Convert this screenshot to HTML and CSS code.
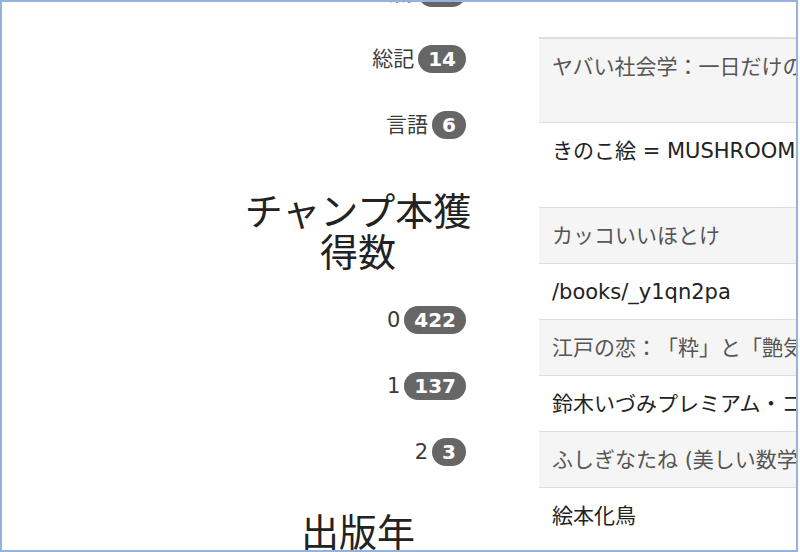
FILE: index.html
```html
<!DOCTYPE html>
<html lang="ja">
<head>
<meta charset="utf-8">
<title>チャンプ本</title>
<link rel="stylesheet" href="styles.css">
</head>
<body>
<div class="frame">
  <div class="page">
    <aside class="facets">
      <div class="facet-item"><span class="label">芸術</span><span class="badge">15</span></div>
      <div class="facet-item"><span class="label">総記</span><span class="badge">14</span></div>
      <div class="facet-item"><span class="label">言語</span><span class="badge">6</span></div>
      <h2 class="facet-title">チャンプ本獲得数</h2>
      <div class="facet-item"><span class="label">0</span><span class="badge">422</span></div>
      <div class="facet-item"><span class="label">1</span><span class="badge">137</span></div>
      <div class="facet-item"><span class="label">2</span><span class="badge">3</span></div>
      <h2 class="facet-title year">出版年</h2>
    </aside>
    <main class="results">
      <table class="books">
        <tbody>
          <tr class="striped first tall"><td>ヤバい社会学：一日だけのギャング・リーダー</td></tr>
          <tr class="tall"><td>きのこ絵 = MUSHROOM ART：不思議の国のきのこたち</td></tr>
          <tr class="striped"><td>カッコいいほとけ</td></tr>
          <tr><td>/books/_y1qn2pa</td></tr>
          <tr class="striped"><td>江戸の恋：「粋」と「艶気」に生きる</td></tr>
          <tr><td>鈴木いづみプレミアム・コレクション</td></tr>
          <tr class="striped"><td>ふしぎなたね (美しい数学)</td></tr>
          <tr><td>絵本化鳥</td></tr>
        </tbody>
      </table>
    </main>
  </div>
</div>
</body>
</html>
```
FILE: styles.css
```css
html, body {
  margin: 0;
  padding: 0;
  background: #fff;
}

body {
  font-family: "DejaVu Sans", "Noto Sans CJK JP", sans-serif;
  font-size: 21px;
  color: #222;
  text-spacing-trim: space-all;
}

.frame {
  width: 798px;
  height: 552px;
  box-sizing: border-box;
  border: 2px solid #93b2dc;
  overflow: hidden;
  background: #fff;
}

.page {
  display: flex;
  align-items: flex-start;
  gap: 61px;
  padding-left: 236px;
}

.facets {
  width: 240px;
  flex: none;
  margin-top: -42px;
  box-sizing: border-box;
  padding-right: 12px;
}

.facet-item {
  height: 66px;
  display: flex;
  justify-content: flex-end;
  align-items: center;
  gap: 4px;
}

.label {
  color: #3a3a3a;
  line-height: 24px;
}

.badge {
  display: inline-block;
  background: #666;
  color: #fff;
  font-weight: bold;
  font-size: 20px;
  line-height: 20px;
  padding: 4px 10px;
  border-radius: 14px;
}

.facet-title {
  margin: 30px -12px 17px 0;
  text-align: center;
  font-family: "Noto Sans CJK JP", sans-serif;
  font-weight: 400;
  font-size: 38px;
  line-height: 41px;
  color: #222;
}

.facet-title.year {
  margin-top: 24px;
}

.results {
  flex: 1;
  min-width: 0;
  margin-top: 35px;
  overflow: hidden;
}

.books {
  border-collapse: collapse;
  width: 100%;
}

.books td {
  white-space: nowrap;
  padding: 14px 13px 12px;
  line-height: 29px;
  border-top: 1px solid #dddddd;
  color: #222;
}

.books tr.striped td {
  background: #f5f5f5;
  color: #555;
}

.books tr.first td {
  border-top: 2px solid #dddddd;
  padding-top: 14px;
}

.books tr.tall td {
  padding-bottom: 41px;
}

.books tr.first.tall td {
  padding-bottom: 40px;
}
```
